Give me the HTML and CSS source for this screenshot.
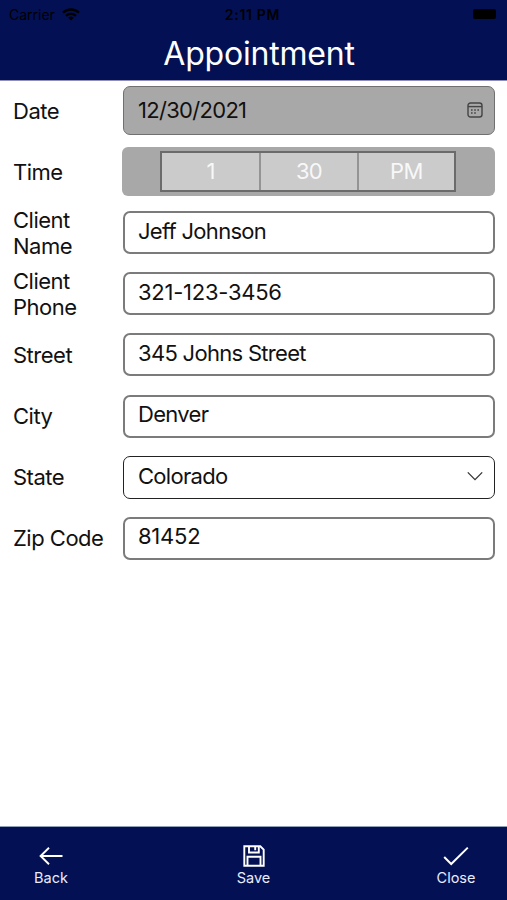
FILE: index.html
```html
<!DOCTYPE html>
<html lang="en">
<head>
  <meta charset="UTF-8">
  <meta name="viewport" content="width=device-width, initial-scale=1.0">
  <title>Appointment</title>
  <link rel="stylesheet" href="styles.css">
</head>
<body>
  <header class="header">
    <div class="statusbar">
      <div class="carrier">
        <span>Carrier</span>
        <svg width="18" height="13" viewBox="0 0 18 13" fill="none" stroke="#000" stroke-width="2.4">
          <path d="M1 4.7a11.5 11.5 0 0 1 16 0"/>
          <path d="M4 7.9a7.2 7.2 0 0 1 10 0"/>
          <path d="M9 12.6L6.2 9.8a4 4 0 0 1 5.6 0z" fill="#000" stroke="none"/>
        </svg>
      </div>
      <span class="clock">2:11 PM</span>
      <div class="battery"></div>
    </div>
    <h1 class="title">Appointment</h1>
  </header>

  <main class="form">
    <div class="row">
      <div class="label">Date</div>
      <div class="field date">
        <span>12/30/2021</span>
        <svg width="16" height="16" viewBox="0 0 16 16" fill="none" stroke="#444" stroke-width="1.4">
          <rect x="1" y="1" width="14" height="14" rx="2.5"/>
          <path d="M1 4.6h14"/>
          <path d="M4 8h1.6M7.2 8h1.6M10.4 8H12M4 11h1.6M7.2 11h1.6" stroke-width="1.6"/>
        </svg>
      </div>
    </div>
    <div class="row">
      <div class="label">Time</div>
      <div class="time">
        <div class="picker">
          <span class="part">1</span>
          <span class="part">30</span>
          <span class="part">PM</span>
        </div>
      </div>
    </div>
    <div class="row">
      <div class="label">Client<br>Name</div>
      <div class="field">Jeff Johnson</div>
    </div>
    <div class="row">
      <div class="label">Client<br>Phone</div>
      <div class="field number">321-123-3456</div>
    </div>
    <div class="row">
      <div class="label">Street</div>
      <div class="field">345 Johns Street</div>
    </div>
    <div class="row">
      <div class="label">City</div>
      <div class="field">Denver</div>
    </div>
    <div class="row">
      <div class="label">State</div>
      <div class="field select">
        <span>Colorado</span>
        <svg width="16" height="10" viewBox="0 0 16 10" fill="none" stroke="#333" stroke-width="1.3">
          <path d="M.8 1.4L8 8.6l7.2-7.2"/>
        </svg>
      </div>
    </div>
    <div class="row">
      <div class="label">Zip Code</div>
      <div class="field number">81452</div>
    </div>
  </main>

  <footer class="toolbar">
    <div class="action">
      <svg width="24" height="24" viewBox="0 0 24 24" fill="none" stroke="#fff" stroke-width="1.9">
        <path d="M23.5 12H1.5M10 3.8L1.6 12l8.4 8.2"/>
      </svg>
      <span>Back</span>
    </div>
    <div class="action">
      <svg width="24" height="24" viewBox="0 0 24 24" fill="none" stroke="#fff" stroke-width="1.9">
        <path d="M2.3 2.3h16l3.4 3.4v16H2.3z"/>
        <path d="M7 2.3v6.2h9.8V2.3M13.2 3v3.2"/>
        <path d="M5.5 21.7v-9h13v9"/>
      </svg>
      <span>Save</span>
    </div>
    <div class="action">
      <svg width="26" height="24" viewBox="0 0 26 24" fill="none" stroke="#fff" stroke-width="2">
        <path d="M1.2 13l7 7L24.8 3.6"/>
      </svg>
      <span>Close</span>
    </div>
  </footer>
</body>
</html>
```

FILE: styles.css
```css
* {
  box-sizing: border-box;
}

body {
  margin: 0;
  height: 900px;
  display: flex;
  flex-direction: column;
  background-color: white;
  color: #111;
  font-family: Inter, "Liberation Sans", sans-serif;
  font-size: 22px;
  letter-spacing: -0.7px;
}

/* Header */
.header {
  height: 81px;
  background-color: #041054;
  border-bottom: 1px solid #8f8fb8;
}
.statusbar {
  height: 28px;
  padding: 0 11px 0 9px;
  display: grid;
  grid-template-columns: 1fr auto 1fr;
  align-items: center;
  color: #000;
  font-size: 14px;
  letter-spacing: 0;
}
.carrier {
  display: flex;
  align-items: center;
  gap: 7px;
}
.clock {
  font-weight: 600;
  font-size: 14px;
  letter-spacing: 0.7px;
}
.battery {
  justify-self: end;
  width: 23px;
  height: 10px;
  border-radius: 2px;
  background-color: #000;
}
.title {
  margin: 0;
  padding-left: 11px;
  line-height: 52px;
  text-align: center;
  color: white;
  font-size: 32px;
  font-weight: 400;
  letter-spacing: -0.2px;
}

/* Form */
.form {
  flex: 1;
  margin-top: -1px;
  padding: 0 12px 0 13px;
}
.row {
  height: 61.1px;
  display: grid;
  grid-template-columns: 110px 1fr;
  align-items: center;
}
.label {
  line-height: 26px;
  letter-spacing: -0.5px;
}
.field {
  height: 43px;
  padding: 0 10px 4px 13px;
  display: flex;
  align-items: center;
  justify-content: space-between;
  border: 2px solid #7b7b7b;
  border-radius: 7px;
}
.number {
  letter-spacing: -0.25px;
}
.date {
  height: 49px;
  padding: 0 11px 1px 14px;
  border: 1px solid #707070;
  background-color: #a8a8a8;
}
.select {
  padding: 0 11px 2px 14px;
  border: 1px solid #222;
}
.time {
  height: 49px;
  margin-left: -1px;
  padding-right: 1px;
  display: flex;
  align-items: center;
  justify-content: center;
  border-radius: 6px;
  background-color: #a8a8a8;
}
.picker {
  width: 296px;
  height: 41px;
  display: grid;
  grid-template-columns: 1fr 1fr 1fr;
  border: 2px solid #6b6b6b;
  background-color: #cbcbcb;
}
.part {
  line-height: 36px;
  text-align: center;
  color: #f8f8f8;
}
.part + .part {
  border-left: 2px solid #949494;
}

/* Bottom toolbar */
.toolbar {
  height: 74px;
  padding: 17px 11px 0;
  display: flex;
  justify-content: space-between;
  border-top: 1px solid #8f9fb9;
  background-color: #041054;
}
.action {
  width: 80px;
  display: flex;
  flex-direction: column;
  align-items: center;
  color: #e9ecfb;
  font-size: 14.5px;
  line-height: 19px;
  letter-spacing: 0;
}
```
